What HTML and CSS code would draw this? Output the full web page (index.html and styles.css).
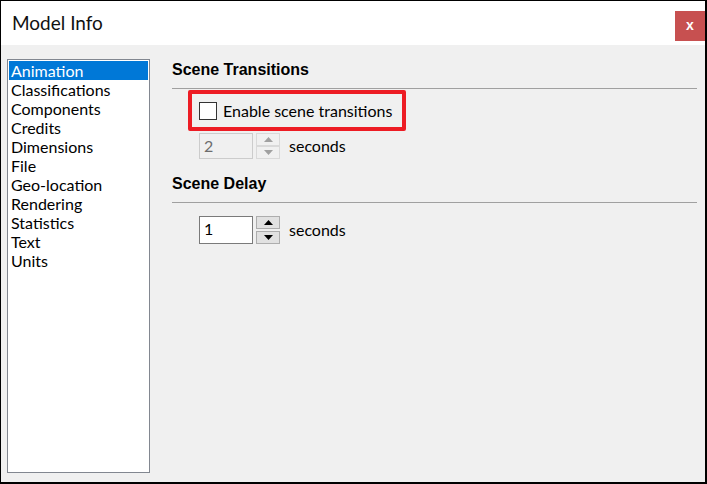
FILE: index.html
```html
<!DOCTYPE html>
<html lang="en">
<head>
  <meta charset="UTF-8">
  <title>Model Info</title>
  <link rel="stylesheet" href="styles.css">
</head>
<body>

  <div class="window">
    <!-- Title bar -->
    <div class="titlebar">
      <span class="title">Model Info</span>
      <span class="close">x</span>
    </div>

    <div class="content">
      <!-- Category list -->
      <ul class="list">
        <li class="selected">Animation</li>
        <li>Classifications</li>
        <li>Components</li>
        <li>Credits</li>
        <li>Dimensions</li>
        <li>File</li>
        <li>Geo-location</li>
        <li>Rendering</li>
        <li>Statistics</li>
        <li>Text</li>
        <li>Units</li>
      </ul>

      <!-- Animation settings -->
      <div class="pane">
        <h2 class="group">Scene Transitions</h2>

        <div class="highlight">
          <span class="checkbox"></span>
          <span>Enable scene transitions</span>
        </div>

        <div class="spin-row disabled">
          <div class="spin-input">2</div>
          <div class="spin-buttons">
            <span class="spin-btn"><svg width="9" height="5" viewBox="0 0 9 5"><polygon points="0,5 9,5 4.5,0"/></svg></span>
            <span class="spin-btn"><svg width="9" height="5" viewBox="0 0 9 5"><polygon points="0,0 9,0 4.5,5"/></svg></span>
          </div>
          <span class="unit">seconds</span>
        </div>

        <h2 class="group second">Scene Delay</h2>

        <div class="spin-row tall">
          <div class="spin-input">1</div>
          <div class="spin-buttons">
            <span class="spin-btn"><svg width="9" height="5" viewBox="0 0 9 5"><polygon points="0,5 9,5 4.5,0"/></svg></span>
            <span class="spin-btn"><svg width="9" height="5" viewBox="0 0 9 5"><polygon points="0,0 9,0 4.5,5"/></svg></span>
          </div>
          <span class="unit">seconds</span>
        </div>
      </div>
    </div>
  </div>

</body>
</html>
```

FILE: styles.css
```css
body {
  margin: 0;
  font-family: 'Lato', 'Liberation Sans', sans-serif;
  font-size: 16px;
  color: #000;
}

.window {
  width: 707px;
  height: 484px;
  box-sizing: border-box;
  border: 1px solid #000;
  border-right-width: 2px;
  border-bottom-width: 2px;
  background: #f0f0f0;
  display: flex;
  flex-direction: column;
}

.titlebar {
  height: 44px;
  background: #fff;
  display: flex;
  justify-content: space-between;
  align-items: flex-start;
}

.title {
  font-size: 19px;
  line-height: 44px;
  padding-left: 11px;
  color: #111;
}

.close {
  width: 30px;
  height: 30px;
  margin-top: 10px;
  background: #c75050;
  color: #fff;
  font-family: 'Liberation Sans', sans-serif;
  font-weight: bold;
  font-size: 14px;
  line-height: 29px;
  text-align: center;
}

.content {
  flex: 1;
  display: flex;
  padding: 14px 8px 9px 6px;
}

.list {
  list-style: none;
  margin: 0;
  padding: 1px;
  width: 143px;
  box-sizing: border-box;
  background: #fff;
  border: 1px solid #828790;
}

.list li {
  line-height: 19px;
  height: 19px;
  padding-left: 2px;
  white-space: nowrap;
}

.list .selected {
  background: #0078d7;
  color: #fff;
}

.pane {
  flex: 1;
  margin-left: 22px;
  padding-top: 1px;
}

.group {
  margin: 0;
  font-family: 'Liberation Sans', sans-serif;
  font-size: 16px;
  font-weight: bold;
  line-height: 20px;
  padding-bottom: 8px;
  border-bottom: 1px solid #a0a0a0;
}

.group.second {
  margin-top: 15px;
}

.highlight {
  width: 218px;
  height: 41px;
  box-sizing: border-box;
  margin: 1px 0 0 16px;
  border: 4px solid #ed1c24;
  border-radius: 2px;
  padding-left: 7px;
  display: flex;
  align-items: center;
  gap: 6px;
  line-height: 20px;
}

.checkbox {
  width: 18px;
  height: 18px;
  box-sizing: border-box;
  border: 1px solid #333;
  background: #fff;
}

.spin-row {
  display: flex;
  align-items: center;
  margin: 2px 0 0 27px;
  height: 26px;
}

.spin-row.tall {
  margin-top: 13px;
  height: 28px;
}

.spin-input {
  width: 54px;
  height: 100%;
  box-sizing: border-box;
  border: 1px solid #7a7a7a;
  background: #fff;
  padding-left: 4px;
  line-height: 24px;
}

.spin-buttons {
  height: 100%;
  margin-left: 3px;
  display: flex;
  flex-direction: column;
  justify-content: space-between;
}

.spin-btn {
  width: 24px;
  height: 13px;
  box-sizing: border-box;
  border: 1px solid #adadad;
  background: #e1e1e1;
  display: flex;
  align-items: center;
  justify-content: center;
}

.spin-btn svg {
  fill: #000;
}

.unit {
  margin-left: 9px;
  line-height: 20px;
  margin-bottom: 1px;
}

.disabled .spin-input {
  border-color: #cccccc;
  background: #f0f0f0;
  color: #6d6d6d;
}

.disabled .spin-btn {
  border-color: #d9d9d9;
  background: #f0f0f0;
}

.disabled .spin-btn svg {
  fill: #a0a0a0;
}
```
